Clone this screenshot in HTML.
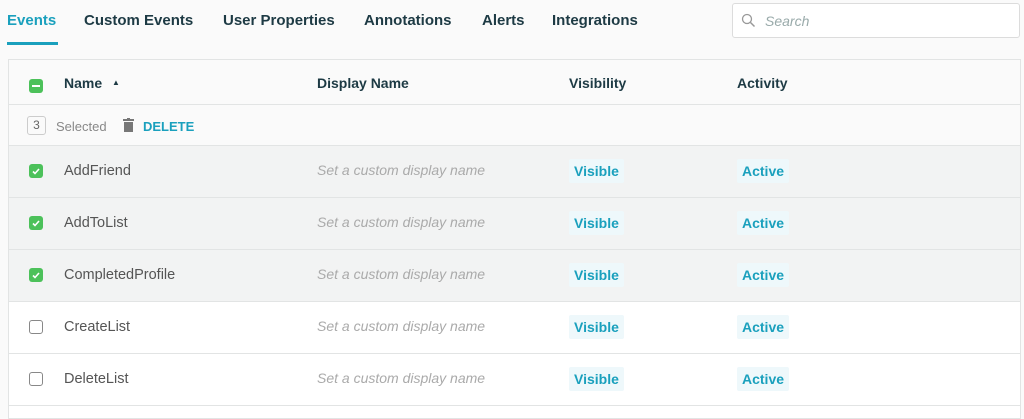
<!DOCTYPE html><html><head><style>
*{box-sizing:border-box;margin:0;padding:0}
body{width:1024px;height:409px;overflow:hidden;background:#fafafa;font-family:"Liberation Sans",sans-serif;position:relative}
.tab{position:absolute;top:12px;font-size:15px;font-weight:bold;color:#1d3a44}
.search{position:absolute;left:732px;top:3px;width:288px;height:35px;border:1px solid #dcdcdc;border-radius:3px;background:#fff}
.search span{position:absolute;left:32px;top:9px;font-style:italic;color:#9aa;font-size:14px}
.tbl{position:absolute;left:8px;top:59px;width:1013px;height:360px;border:1px solid #e2e4e4;background:#fff}
.row{position:absolute;left:0;width:100%;border-bottom:1px solid #e2e4e4}
.h{font-size:14px;font-weight:bold;color:#1d3a44;position:absolute;top:15px}
.cb{position:absolute;left:20px;width:14px;height:14px;border-radius:3px}
.cb.on{background:#4cc15a}
.cb.off{border:1.5px solid #888;background:#fff}
.nm{position:absolute;left:55px;font-size:14.5px;color:#555}
.ph{position:absolute;left:308px;font-size:14px;font-style:italic;color:#aaa}
.pill{position:absolute;height:24px;line-height:24px;padding:0 5px;font-size:14px;font-weight:bold;color:#1aa0bd;background:#eef8fb;border-radius:2px}
</style></head><body>
<div class="tab" style="left:7px;color:#1aa0bd">Events</div>
<div style="position:absolute;left:7px;top:42px;width:51px;height:3px;background:#1aa0bd"></div>
<div class="tab" style="left:84px">Custom Events</div>
<div class="tab" style="left:223px">User Properties</div>
<div class="tab" style="left:364px">Annotations</div>
<div class="tab" style="left:482px">Alerts</div>
<div class="tab" style="left:552px">Integrations</div>
<div class="search"><svg style="position:absolute;left:8px;top:9px" width="15" height="15" viewBox="0 0 15 15"><circle cx="6" cy="6" r="4.5" fill="none" stroke="#999" stroke-width="1.3"/><path d="M9.5 9.5L13.5 13.5" stroke="#999" stroke-width="1.5"/></svg><span>Search</span></div>
<div class="tbl">
<div class="row" style="top:0;height:45px;background:#fafafa">
<div class="cb on" style="top:19px"><div style="position:absolute;left:3px;top:6px;width:8px;height:2px;background:#fff"></div></div>
<div class="h" style="left:55px">Name <span style="font-size:8px;vertical-align:3px;margin-left:6px">▲</span></div>
<div class="h" style="left:308px">Display Name</div>
<div class="h" style="left:560px">Visibility</div>
<div class="h" style="left:728px">Activity</div>
</div>
<div class="row" style="top:45px;height:41px;background:#fafafa">
<div style="position:absolute;left:18px;top:11px;width:19px;height:19px;border:1px solid #ccc;border-radius:3px;font-size:12px;color:#666;text-align:center;line-height:17px">3</div>
<div style="position:absolute;left:47px;top:14px;font-size:13px;color:#888">Selected</div>
<svg style="position:absolute;left:114px;top:13px" width="11" height="14" viewBox="0 0 11 14"><rect x="0" y="1" width="11" height="2" fill="#777"/><rect x="4" y="0" width="3" height="2" fill="#777"/><rect x="1" y="4" width="9" height="10" fill="#777"/></svg>
<div style="position:absolute;left:134px;top:14px;font-size:13px;color:#1aa0bd;font-weight:bold">DELETE</div>
</div>
<div class="row" style="top:86px;height:52px;background:#f2f3f3"><div class="cb on" style="top:18px"><svg width="14" height="14"><path d="M4 7.5L6 9.5L10 5" stroke="#fff" stroke-width="1.6" fill="none"/></svg></div><div class="nm" style="top:17px">AddFriend</div><div class="ph" style="top:16px">Set a custom display name</div><div class="pill" style="left:560px;top:13px">Visible</div><div class="pill" style="left:728px;top:13px">Active</div></div>
<div class="row" style="top:138px;height:52px;background:#f2f3f3"><div class="cb on" style="top:18px"><svg width="14" height="14"><path d="M4 7.5L6 9.5L10 5" stroke="#fff" stroke-width="1.6" fill="none"/></svg></div><div class="nm" style="top:17px">AddToList</div><div class="ph" style="top:16px">Set a custom display name</div><div class="pill" style="left:560px;top:13px">Visible</div><div class="pill" style="left:728px;top:13px">Active</div></div>
<div class="row" style="top:190px;height:52px;background:#f2f3f3"><div class="cb on" style="top:18px"><svg width="14" height="14"><path d="M4 7.5L6 9.5L10 5" stroke="#fff" stroke-width="1.6" fill="none"/></svg></div><div class="nm" style="top:17px">CompletedProfile</div><div class="ph" style="top:16px">Set a custom display name</div><div class="pill" style="left:560px;top:13px">Visible</div><div class="pill" style="left:728px;top:13px">Active</div></div>
<div class="row" style="top:242px;height:52px"><div class="cb off" style="top:18px"></div><div class="nm" style="top:17px">CreateList</div><div class="ph" style="top:16px">Set a custom display name</div><div class="pill" style="left:560px;top:13px">Visible</div><div class="pill" style="left:728px;top:13px">Active</div></div>
<div class="row" style="top:294px;height:52px"><div class="cb off" style="top:18px"></div><div class="nm" style="top:17px">DeleteList</div><div class="ph" style="top:16px">Set a custom display name</div><div class="pill" style="left:560px;top:13px">Visible</div><div class="pill" style="left:728px;top:13px">Active</div></div>
</div>
</body></html>
